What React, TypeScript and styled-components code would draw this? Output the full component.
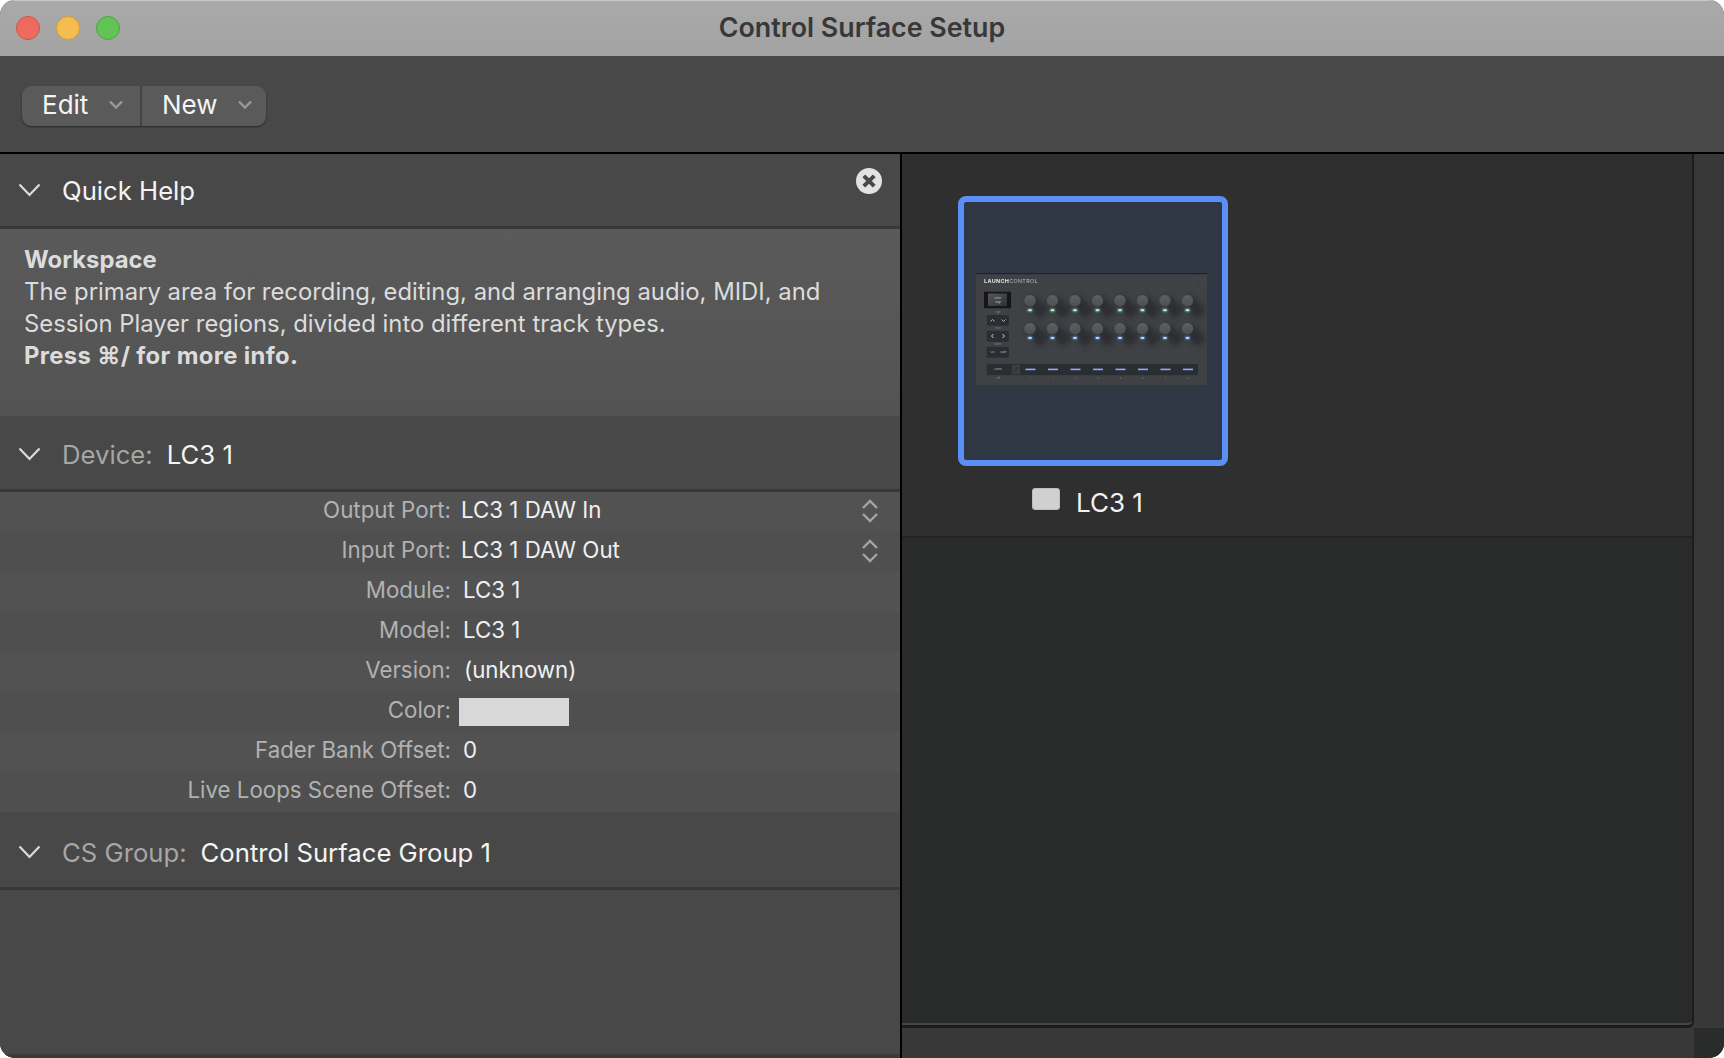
import { createGlobalStyle } from "styled-components";
import styled from "styled-components";

const Global = createGlobalStyle`
  html, body {
    margin: 0;
    padding: 0;
    background: #fff;
  }
  body {
    font-family: Inter, "Noto Sans", "DejaVu Sans", sans-serif;
    -webkit-font-smoothing: antialiased;
  }
`;

const Window = styled.div`
  width: 1724px;
  height: 1058px;
  display: flex;
  flex-direction: column;
  border-radius: 15px;
  overflow: hidden;
  background: #484848;
`;

const TitleBar = styled.div`
  position: relative;
  flex: 0 0 56px;
  display: flex;
  align-items: center;
  justify-content: center;
  padding-bottom: 4px;
  background: linear-gradient(#a9a9a9, #a3a3a3);
  border-top: 1px solid #c8c8c8;
  box-sizing: border-box;
`;

const Lights = styled.div`
  position: absolute;
  left: 16px;
  top: 15px;
  display: flex;
  gap: 16px;
`;

const Light = styled.span<{ $fill: string; $edge: string }>`
  width: 24px;
  height: 24px;
  border-radius: 50%;
  box-sizing: border-box;
  background: ${(p) => p.$fill};
  border: 1px solid ${(p) => p.$edge};
`;

const Title = styled.div`
  font-size: 26.8px;
  font-weight: 600;
  color: #383838;
`;

const Toolbar = styled.div`
  flex: 0 0 96px;
  display: flex;
  align-items: center;
  padding: 4px 0 0 22px;
  box-sizing: border-box;
  background: #484848;
`;

const Segments = styled.div`
  display: flex;
  height: 40px;
  border-radius: 9px;
  background: #5a5a5a;
  box-shadow: 0 1px 2px rgba(0, 0, 0, 0.45);
`;

const Segment = styled.div<{ $width: number; $divider?: boolean }>`
  width: ${(p) => p.$width}px;
  display: flex;
  align-items: center;
  justify-content: space-between;
  box-sizing: border-box;
  padding: 0 ${(p) => (p.$divider ? 17 : 14)}px 3px 20px;
  font-size: 26px;
  color: #f4f4f4;
  border-right: ${(p) => (p.$divider ? "2px solid #444" : "none")};
`;

const Main = styled.div`
  flex: 1;
  display: flex;
  min-height: 0;
  border-top: 2px solid #000;
`;

const Left = styled.div`
  position: relative;
  flex: 0 0 900px;
  display: flex;
  flex-direction: column;
  background: #484848;
  border-right: 2px solid #000;
  box-shadow: inset 0 -4px 0 #3a3a3a;
`;

const Header = styled.div<{ $height: number; $nudge?: number }>`
  flex: 0 0 ${(p) => p.$height}px;
  box-sizing: border-box;
  display: flex;
  align-items: center;
  gap: 21px;
  padding: ${(p) => p.$nudge ?? 0}px 0 0 18px;
  font-size: 25.7px;
  color: #f4f4f4;
  background: #484848;
  border-bottom: 3px solid #383838;
`;

const HeaderKey = styled.span`
  color: #a6a6a6;
  margin-right: 14px;
`;

const CloseButton = styled.svg`
  position: absolute;
  right: 18px;
  top: 14px;
`;

const HelpBody = styled.div`
  flex: 0 0 187px;
  box-sizing: border-box;
  padding: 15px 0 0 24px;
  background: linear-gradient(#5a5a5a, #535353);
  color: #dcdcdc;
  font-size: 23.85px;
  line-height: 32px;
`;

const Bold = styled.div<{ $wide?: boolean }>`
  font-weight: 700;
  letter-spacing: ${(p) => (p.$wide ? "0.35px" : "0")};
`;

const Rows = styled.div`
  display: flex;
  flex-direction: column;
`;

const Row = styled.div<{ $alt: boolean }>`
  height: 40px;
  box-sizing: border-box;
  padding-bottom: 6px;
  display: grid;
  grid-template-columns: 451px 1fr 39px;
  align-items: center;
  font-size: 22.3px;
  background: ${(p) => (p.$alt ? "#4f4f4f" : "#525252")};
`;

const RowLabel = styled.span`
  text-align: right;
  color: #b2b2b2;
`;

const RowValue = styled.span<{ $indent: number }>`
  padding-left: ${(p) => p.$indent}px;
  color: #f0f0f0;
`;

const Swatch = styled.span`
  display: block;
  width: 110px;
  height: 28px;
  margin: 6px 0 0 8px;
  background: #d8d8d8;
`;

const StepperSlot = styled.span`
  display: flex;
  margin-top: 4px;
`;

const Right = styled.div`
  flex: 1;
  display: grid;
  grid-template-columns: 1fr 30px;
  grid-template-rows: 1fr 30px;
  min-width: 0;
  background: #383838;
`;

const Canvas = styled.div`
  display: flex;
  flex-direction: column;
  background: #292b2a;
  border-right: 2px solid #1c1c1c;
  border-bottom: 3px solid #1c1c1c;
  border-bottom-right-radius: 6px;
  box-shadow: inset 0 -2px 0 #464646;
`;

const Shelf = styled.div`
  flex: 0 0 384px;
  box-sizing: border-box;
  background: #2f2f2f;
  border-bottom: 2px solid #232323;
  padding: 42px 0 0 56px;
`;

const Tile = styled.div`
  width: 270px;
  height: 270px;
  box-sizing: border-box;
  display: flex;
  align-items: center;
  justify-content: center;
  padding: 0 3px 4px 0;
  border: 6px solid #5a8ff5;
  border-radius: 8px;
  background: #2f3744;
`;

const TileCaption = styled.div`
  display: flex;
  align-items: center;
  gap: 16px;
  margin: 21px 0 0 74px;
  font-size: 26px;
  color: #f2f2f2;
`;

const TileDot = styled.span`
  width: 28px;
  height: 22px;
  margin-bottom: 8px;
  border-radius: 4px;
  background: #d0d0d0;
  box-shadow: inset 0 0 0 1px #bcbcbc;
`;

const Corner = styled.div`
  background: #2a2c2b;
`;

const rows = [
  { label: "Output Port:", value: "LC3 1 DAW In", indent: 10, stepper: true },
  { label: "Input Port:", value: "LC3 1 DAW Out", indent: 10, stepper: true },
  { label: "Module:", value: "LC3 1", indent: 12 },
  { label: "Model:", value: "LC3 1", indent: 12 },
  { label: "Version:", value: "(unknown)", indent: 13 },
  { label: "Color:", value: "", indent: 0 },
  { label: "Fader Bank Offset:", value: "0", indent: 12 },
  { label: "Live Loops Scene Offset:", value: "0", indent: 12 },
];

const Disclosure = () => (
  <svg width="23" height="14" viewBox="0 0 23 14" fill="none">
    <path d="M1.5 1.5 L11.5 12 L21.5 1.5" stroke="#dcdcdc" strokeWidth="2.2" />
  </svg>
);

const SmallChevron = () => (
  <svg width="14" height="9" viewBox="0 0 14 9" fill="none">
    <path d="M1 1.5 L7 7.5 L13 1.5" stroke="#9a9a9a" strokeWidth="2.4" />
  </svg>
);

const Stepper = () => (
  <svg width="18" height="24" viewBox="0 0 18 24" fill="none">
    <path d="M2 9 L9 2 L16 9" stroke="#a4a4a4" strokeWidth="2.4" />
    <path d="M2 15 L9 22 L16 15" stroke="#a4a4a4" strokeWidth="2.4" />
  </svg>
);

const knobX = [0, 1, 2, 3, 4, 5, 6, 7].map((i) => 54 + i * 22.5);

const DeviceArt = () => (
  <svg width="231" height="112" viewBox="0 0 231 112">
    <defs>
      <filter id="soft">
        <feGaussianBlur stdDeviation="0.35" />
      </filter>
      <filter id="shade" x="-50%" y="-50%" width="200%" height="200%">
        <feGaussianBlur stdDeviation="2.4" />
      </filter>
      <filter id="glow" x="-100%" y="-100%" width="300%" height="300%">
        <feGaussianBlur stdDeviation="0.9" />
      </filter>
      <linearGradient id="knob" x1="0" y1="0" x2="0" y2="1">
        <stop offset="0" stopColor="#5e6063" />
        <stop offset="1" stopColor="#4c4e51" />
      </linearGradient>
      <linearGradient id="screen" x1="0" y1="0" x2="1" y2="1">
        <stop offset="0" stopColor="#55575a" />
        <stop offset="1" stopColor="#2f3134" />
      </linearGradient>
    </defs>
    <rect width="231" height="112" fill="#3f4145" />
    <rect width="231" height="1.2" fill="#202226" />
    <g filter="url(#soft)">
      <text x="8" y="9.8" fontSize="5.4" fontWeight="700" letterSpacing="0.35" fill="#e0e0e0">
        LAUNCH
        <tspan fontWeight="400" fill="#bcbcbc">
          CONTROL
        </tspan>
      </text>
      <path d="M222 4 L229 11 L222 18 L215 11 Z" fill="none" stroke="#47494d" strokeWidth="0.8" />

      <rect x="8" y="18.7" width="27" height="16.6" fill="#151618" />
      <rect x="12" y="20.5" width="19" height="12.5" fill="url(#screen)" />
      <text x="22" y="26" fontSize="2.6" fill="#c0c0c0" textAnchor="middle">
        Mixer
      </text>
      <text x="22" y="30" fontSize="2.6" fill="#c0c0c0" textAnchor="middle">
        Page
      </text>

      <text x="22" y="40" fontSize="2" fill="#8a8a8a" textAnchor="middle">
        Page
      </text>
      <rect x="10.7" y="42" width="22.3" height="10.7" rx="1" fill="#2c2e31" />
      <path d="M14.5 48.5 L16.5 46.5 L18.5 48.5" stroke="#c0c0c0" strokeWidth="0.9" fill="none" />
      <path d="M25.5 46.5 L27.5 48.5 L29.5 46.5" stroke="#c0c0c0" strokeWidth="0.9" fill="none" />

      <text x="22" y="56" fontSize="2" fill="#8a8a8a" textAnchor="middle">
        Track
      </text>
      <rect x="10.7" y="57.7" width="22.3" height="11" rx="1" fill="#2c2e31" />
      <path d="M17.5 61 L15.5 63 L17.5 65" stroke="#d0d0d0" strokeWidth="1" fill="none" />
      <path d="M26.5 61 L28.5 63 L26.5 65" stroke="#d0d0d0" strokeWidth="1" fill="none" />

      <text x="22" y="72" fontSize="2" fill="#8a8a8a" textAnchor="middle">
        Buttons
      </text>
      <rect x="10.7" y="73.7" width="22.3" height="11" rx="1" fill="#2c2e31" />
      <text x="16.5" y="80" fontSize="2.6" fill="#b8b8b8" textAnchor="middle">
        Vol
      </text>
      <text x="27.5" y="80" fontSize="2.6" fill="#b8b8b8" textAnchor="middle">
        Mute
      </text>
    </g>
    {knobX.map((x) => (
      <path
        key={x}
        d={`M${x - 5} 31 L${x + 4} 22 L${x + 19} 37 L${x + 10} 46 Z M${x - 5} 59 L${x + 4} 50 L${x + 19} 65 L${x + 10} 74 Z`}
        fill="#26282b"
        opacity="0.7"
        filter="url(#shade)"
      />
    ))}
    {knobX.map((x) => (
      <g key={x}>
        <circle cx={x} cy="27.7" r="5.7" fill="url(#knob)" filter="url(#soft)" />
        <circle cx={x} cy="55.7" r="5.7" fill="url(#knob)" filter="url(#soft)" />
        <rect x={x - 2.5} y="35.7" width="5" height="3" fill="#6fcf95" opacity="0.8" filter="url(#glow)" />
        <rect x={x - 1.7} y="36.3" width="3.4" height="1.8" fill="#bff2d2" />
        <rect x={x - 2.5} y="63.4" width="5" height="3" fill="#5f9ef2" opacity="0.8" filter="url(#glow)" />
        <rect x={x - 1.7} y="64" width="3.4" height="1.8" fill="#c2dffc" />
      </g>
    ))}
    <g filter="url(#soft)">
      <rect x="10.7" y="90.7" width="211.3" height="11.6" rx="1" fill="#2c2e31" />
      <text x="22" y="97.3" fontSize="2.6" fill="#b8b8b8" textAnchor="middle">
        Arrow
      </text>
      <rect x="36" y="91.7" width="8" height="9.6" fill="#3a3c40" />
      <path d="M38 99 L42 94" stroke="#25272a" strokeWidth="0.8" />
      {knobX.map((x, i) => (
        <g key={x}>
          <rect x={x - 4.5} y="95.6" width="10" height="1.6" fill="#86aefa" />
          <text x={x + 0.5} y="105.5" fontSize="2" fill="#8a8a8a" textAnchor="middle">
            {i + 1}
          </text>
        </g>
      ))}
      <text x="22" y="105.5" fontSize="2" fill="#8a8a8a" textAnchor="middle">
        Shift
      </text>
    </g>
  </svg>
);

export default function App() {
  return (
    <Window>
      <Global />
      <TitleBar>
        <Lights>
          <Light $fill="#ee6a5f" $edge="#d0564c" />
          <Light $fill="#f5bd4f" $edge="#d69e36" />
          <Light $fill="#61c454" $edge="#4ea540" />
        </Lights>
        <Title>Control Surface Setup</Title>
      </TitleBar>
      <Toolbar>
        <Segments>
          <Segment $width={120} $divider>
            Edit
            <SmallChevron />
          </Segment>
          <Segment $width={124}>
            New
            <SmallChevron />
          </Segment>
        </Segments>
      </Toolbar>
      <Main>
        <Left>
          <Header $height={75}>
            <Disclosure />
            Quick Help
          </Header>
          <CloseButton width="26" height="26" viewBox="0 0 26 26">
            <circle cx="13" cy="13" r="13" fill="#e2e2e2" />
            <path d="M7.8 7.8 L18.2 18.2 M18.2 7.8 L7.8 18.2" stroke="#484848" strokeWidth="4" />
          </CloseButton>
          <HelpBody>
            <Bold>Workspace</Bold>
            The primary area for recording, editing, and arranging audio, MIDI, and
            <br />
            Session Player regions, divided into different track types.
            <Bold $wide>Press ⌘/ for more info.</Bold>
          </HelpBody>
          <Header $height={76} $nudge={3}>
            <Disclosure />
            <span>
              <HeaderKey>Device:</HeaderKey>LC3 1
            </span>
          </Header>
          <Rows>
            {rows.map((row, i) => (
              <Row key={row.label} $alt={i % 2 === 1}>
                <RowLabel>{row.label}</RowLabel>
                {row.label === "Color:" ? <Swatch /> : <RowValue $indent={row.indent}>{row.value}</RowValue>}
                {row.stepper && (
                  <StepperSlot>
                    <Stepper />
                  </StepperSlot>
                )}
              </Row>
            ))}
          </Rows>
          <Header $height={78} $nudge={5}>
            <Disclosure />
            <span>
              <HeaderKey>CS Group:</HeaderKey>Control Surface Group 1
            </span>
          </Header>
        </Left>
        <Right>
          <Canvas>
            <Shelf>
              <Tile>
                <DeviceArt />
              </Tile>
              <TileCaption>
                <TileDot />
                LC3 1
              </TileCaption>
            </Shelf>
          </Canvas>
          <div />
          <div />
          <Corner />
        </Right>
      </Main>
    </Window>
  );
}
